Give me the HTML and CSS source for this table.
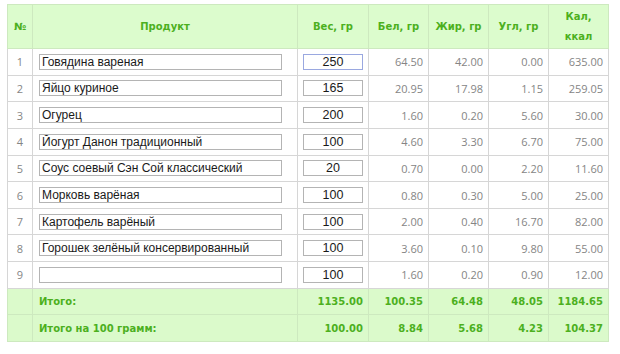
FILE: index.html
```html
<!DOCTYPE html>
<html>
<head>
<meta charset="utf-8">
<link rel="stylesheet" href="styles.css">
</head>
<body>
<table class="calc">
  <colgroup>
    <col class="c-num"><col class="c-prod"><col class="c-w"><col class="c-v"><col class="c-v"><col class="c-v"><col class="c-v">
  </colgroup>
  <thead>
    <tr>
      <th>№</th><th>Продукт</th><th>Вес, гр</th><th>Бел, гр</th><th>Жир, гр</th><th>Угл, гр</th><th>Кал,<br>ккал</th>
    </tr>
  </thead>
  <tbody>
    <tr><td class="n">1</td><td class="p"><input class="prod" value="Говядина вареная"></td><td class="w"><input class="wt focus" value="250"></td><td>64.50</td><td>42.00</td><td>0.00</td><td>635.00</td></tr>
    <tr><td class="n">2</td><td class="p"><input class="prod" value="Яйцо куриное"></td><td class="w"><input class="wt" value="165"></td><td>20.95</td><td>17.98</td><td>1.15</td><td>259.05</td></tr>
    <tr><td class="n">3</td><td class="p"><input class="prod" value="Огурец"></td><td class="w"><input class="wt" value="200"></td><td>1.60</td><td>0.20</td><td>5.60</td><td>30.00</td></tr>
    <tr><td class="n">4</td><td class="p"><input class="prod" value="Йогурт Данон традиционный"></td><td class="w"><input class="wt" value="100"></td><td>4.60</td><td>3.30</td><td>6.70</td><td>75.00</td></tr>
    <tr><td class="n">5</td><td class="p"><input class="prod" value="Соус соевый Сэн Сой классический"></td><td class="w"><input class="wt" value="20"></td><td>0.70</td><td>0.00</td><td>2.20</td><td>11.60</td></tr>
    <tr><td class="n">6</td><td class="p"><input class="prod" value="Морковь варёная"></td><td class="w"><input class="wt" value="100"></td><td>0.80</td><td>0.30</td><td>5.00</td><td>25.00</td></tr>
    <tr><td class="n">7</td><td class="p"><input class="prod" value="Картофель варёный"></td><td class="w"><input class="wt" value="100"></td><td>2.00</td><td>0.40</td><td>16.70</td><td>82.00</td></tr>
    <tr><td class="n">8</td><td class="p"><input class="prod" value="Горошек зелёный консервированный"></td><td class="w"><input class="wt" value="100"></td><td>3.60</td><td>0.10</td><td>9.80</td><td>55.00</td></tr>
    <tr><td class="n">9</td><td class="p"><input class="prod" value=""></td><td class="w"><input class="wt" value="100"></td><td>1.60</td><td>0.20</td><td>0.90</td><td>12.00</td></tr>
  </tbody>
  <tfoot>
    <tr><td></td><td class="lbl">Итого:</td><td>1135.00</td><td>100.35</td><td>64.48</td><td>48.05</td><td>1184.65</td></tr>
    <tr><td></td><td class="lbl">Итого на 100 грамм:</td><td>100.00</td><td>8.84</td><td>5.68</td><td>4.23</td><td>104.37</td></tr>
  </tfoot>
</table>
</body>
</html>
```
FILE: styles.css
```css
html, body {
  margin: 0;
  background: #fff;
}
body {
  padding: 4px 0 0 7px;
  font-family: "Open Sans", "DejaVu Sans", sans-serif;
}
.calc {
  border-collapse: collapse;
  table-layout: fixed;
  width: 601px;
  font-size: 11px;
}
.c-num { width: 25px; }
.c-prod { width: 265px; }
.c-w { width: 71px; }
.c-v { width: 60px; }

.calc th, .calc td {
  border: 1px solid #d6d6d6;
  padding: 0 5px;
}
.calc th {
  height: 43px;
  background: #dcfccd;
  color: #4cb01e;
  font-weight: bold;
  text-align: center;
  line-height: 20px;
  font-family: "DejaVu Sans", sans-serif;
  font-size: 10px;
  border-color: #cde9bf;
}
.calc tbody td {
  height: 25.65px;
  color: #858585;
  text-align: right;
}
.calc tbody td.n { text-align: center; padding: 0; }
.calc tbody td.p { text-align: left; padding: 0 0 0 6px; }
.calc tbody td.w { text-align: left; padding: 0 0 0 5px; }

.prod, .wt {
  box-sizing: border-box;
  height: 16px;
  border: 1px solid #b4b4b4;
  padding: 0 2px;
  margin: 0;
  font-family: "Liberation Sans", Arial, sans-serif;
  font-size: 12px;
  color: #1a1a1a;
  background: #fff;
  outline: none;
  display: block;
}
.prod { width: 243px; }
.wt { width: 60px; text-align: center; font-size: 12.5px; }
.wt.focus { border-color: #9aa8e0; }

.calc tfoot td {
  height: 25.65px;
  background: #dbfacb;
  color: #4cb01e;
  font-weight: bold;
  text-align: right;
  font-family: "DejaVu Sans", sans-serif;
  font-size: 10px;
  border-color: #cde9bf;
}
.calc tfoot td.lbl { text-align: left; padding-left: 6px; }
```
